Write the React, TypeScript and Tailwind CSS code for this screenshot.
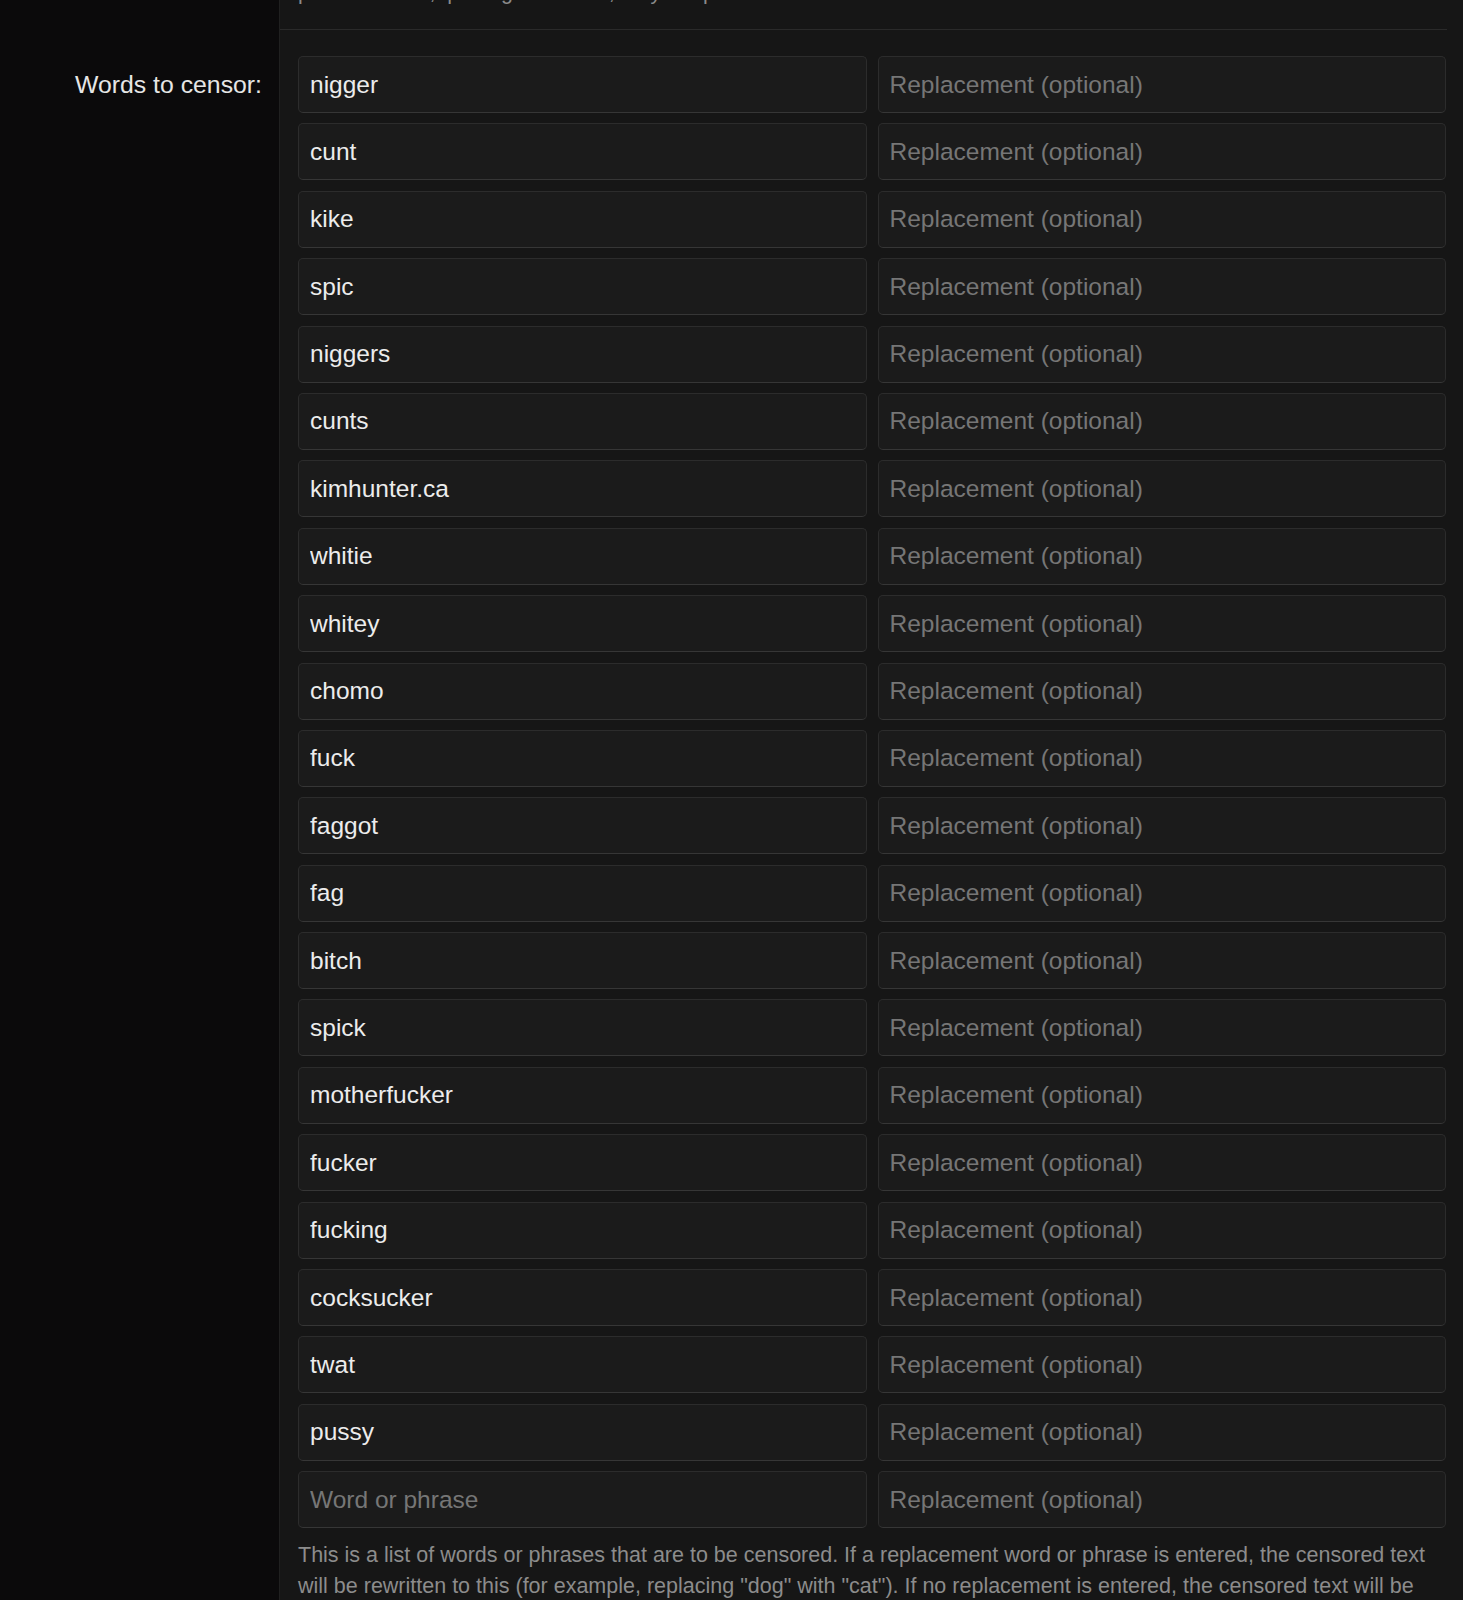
const words = [
  "nigger",
  "cunt",
  "kike",
  "spic",
  "niggers",
  "cunts",
  "kimhunter.ca",
  "whitie",
  "whitey",
  "chomo",
  "fuck",
  "faggot",
  "fag",
  "bitch",
  "spick",
  "motherfucker",
  "fucker",
  "fucking",
  "cocksucker",
  "twat",
  "pussy",
];

const inputClass =
  "h-[57px] w-full rounded-[5px] border border-[#2c2c2c] border-b-[#363636] bg-[#1b1b1b] px-[11px] text-[24.5px] text-[#ececec] placeholder:text-[#767676] outline-none";

export default function App() {
  return (
    <div
      className="h-[1600px] w-full overflow-hidden bg-[#141414]"
      style={{ fontFamily: '"Liberation Sans", Arial, sans-serif' }}
    >
      {/* previous option, scrolled off */}
      <div className="flex">
        <div className="w-[279px] shrink-0 bg-[#0b0a0b]" />
        <div className="flex-1 border-l border-[#202020] bg-[#161616] pr-[16px]">
          <div className="h-[30px] overflow-hidden border-b border-[#2a2a2a] pl-[18px]">
            <p className="mt-[-23.5px] text-[21.5px] leading-[30.6px] whitespace-pre text-[#8a8a8a]">
              {"p                    ,  p       g                ,      y       p"}
            </p>
          </div>
        </div>
      </div>

      {/* censor words */}
      <div className="flex h-full">
        <div className="w-[279px] shrink-0 bg-[#0b0a0b] pt-[26px] pr-[17px] text-right">
          <label className="block text-[24.8px] leading-[57px] text-[#e6e6e6]">Words to censor:</label>
        </div>
        <div className="flex-1 border-l border-[#202020] bg-[#161616] pt-[26px] pr-[17px] pl-[18px]">
          <div className="grid grid-cols-2 gap-x-[11px] gap-y-[10.4px]">
            {words.map((w) => (
              <div key={w} className="contents">
                <input className={inputClass} defaultValue={w} />
                <input className={inputClass} placeholder="Replacement (optional)" />
              </div>
            ))}
            <input className={inputClass} placeholder="Word or phrase" />
            <input className={inputClass} placeholder="Replacement (optional)" />
          </div>
          <p className="mt-[12px] text-[21.5px] leading-[31px] text-[#8c8c8c]">
            This is a list of words or phrases that are to be censored. If a replacement word or phrase is entered, the
            censored text will be rewritten to this (for example, replacing "dog" with "cat"). If no replacement is
            entered, the censored text will be replaced with the censor character.
          </p>
        </div>
      </div>
    </div>
  );
}
